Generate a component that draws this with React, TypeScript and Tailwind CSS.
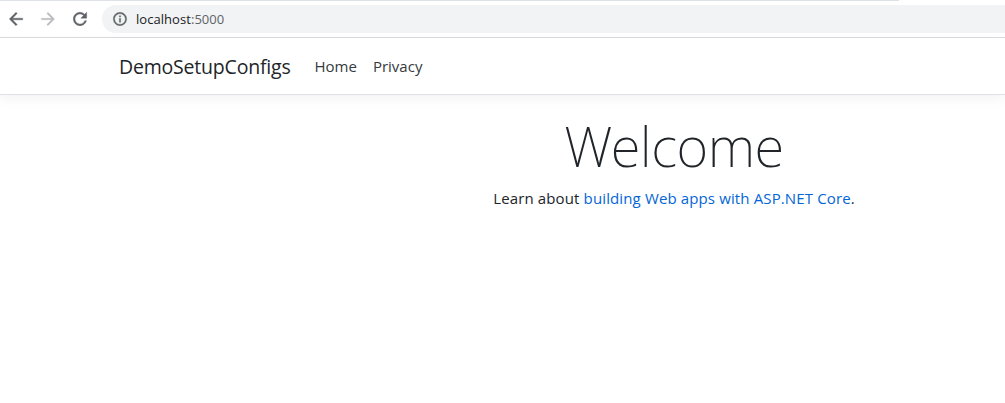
const iconPaths = {
  back: "M20 11H7.83l5.59-5.59L12 4l-8 8 8 8 1.41-1.41L7.83 13H20v-2z",
  forward: "M12 4l-1.41 1.41L16.17 11H4v2h12.17l-5.58 5.59L12 20l8-8z",
  reload:
    "M17.65 6.35A7.958 7.958 0 0 0 12 4c-4.42 0-7.99 3.58-7.99 8s3.57 8 7.99 8c3.73 0 6.84-2.55 7.73-6h-2.08A5.99 5.99 0 0 1 12 18c-3.31 0-6-2.69-6-6s2.69-6 6-6c1.66 0 3.14.69 4.22 1.78L13 11h7V4l-2.35 2.35z",
  info: "M11 7h2v2h-2zm0 4h2v6h-2zm1-9C6.48 2 2 6.48 2 12s4.48 10 10 10 10-4.48 10-10S17.52 2 12 2zm0 18c-4.41 0-8-3.59-8-8s3.59-8 8-8 8 3.59 8 8-3.59 8-8 8z",
};

function Icon({ name, className }: { name: keyof typeof iconPaths; className: string }) {
  return (
    <svg viewBox="0 0 24 24" fill="currentColor" stroke="currentColor" className={className}>
      <path d={iconPaths[name]} />
    </svg>
  );
}

function BrowserToolbar() {
  return (
    <div className="h-[38px] border-b border-[#dadce0] bg-white">
      <div className="h-px w-[899px] bg-[#dee1e6]" />
      <div className="flex h-9 items-center">
        <div className="flex w-[102px] shrink-0 items-center gap-3 pl-[6px]">
          <Icon name="back" className="size-5 shrink-0 stroke-[0.5px] text-[#5f6368]" />
          <Icon name="forward" className="size-5 shrink-0 stroke-[0.3px] text-[#babcbe]" />
          <Icon name="reload" className="size-5 shrink-0 stroke-[0.5px] text-[#5f6368]" />
        </div>
        <div className="flex h-7 flex-1 items-center rounded-l-full bg-[#f1f3f4] pl-[10px]">
          <Icon name="info" className="size-4 stroke-[0.5px] text-[#5f6368]" />
          <span className="ml-2 pt-px text-[13px] tracking-[0.05px] text-[#202124]">
            localhost<span className="text-[#5f6368]">:5000</span>
          </span>
        </div>
      </div>
    </div>
  );
}

export default function App() {
  return (
    <div className="h-[403px] w-full overflow-hidden bg-white font-['Open_Sans','Noto_Sans',sans-serif] text-[#212529]">
      <BrowserToolbar />
      <nav className="flex h-[57px] items-center border-b border-[#dee2e6] pl-[119px] shadow-[0_4px_12px_rgba(0,0,0,0.05)]">
        <a className="pt-px text-[19.5px] tracking-[-0.2px]">DemoSetupConfigs</a>
        <a className="ml-6 text-[15px] text-[#343a40]">Home</a>
        <a className="ml-4 text-[15px] text-[#343a40]">Privacy</a>
      </nav>
      <main className="flex w-[1348px] flex-col items-center pt-[18px]">
        <h1 className="font-['Noto_Sans','Open_Sans',sans-serif] text-[54.5px] leading-[67px] font-extralight tracking-[-0.5px]">
          Welcome
        </h1>
        <p className="mt-[6px] text-[15px] leading-6 tracking-[0.13px]">
          Learn about <a className="text-[#0366d6]">building Web apps with ASP.NET Core</a>.
        </p>
      </main>
    </div>
  );
}
